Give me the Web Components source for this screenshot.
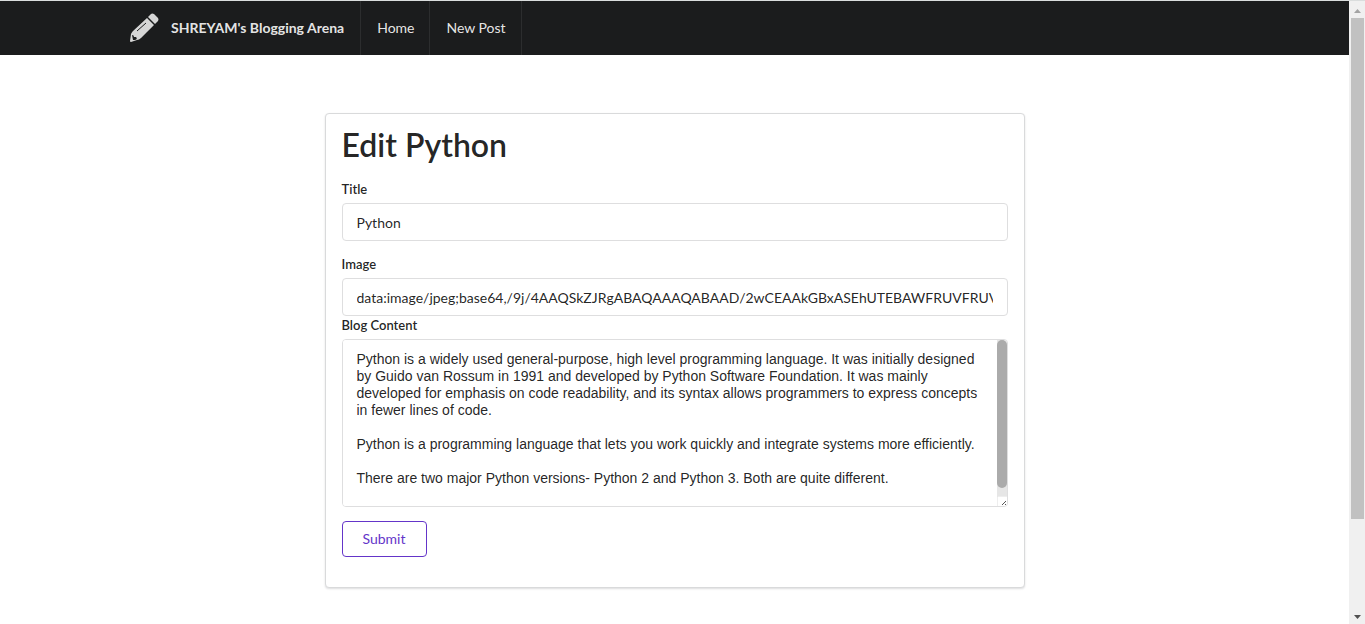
<!DOCTYPE html>
<html lang="en">
<head>
<meta charset="utf-8">
<title>Edit Python</title>
<style>
html,body{margin:0;height:100%;overflow:hidden;background:#fff}
body{font:14px/18px Lato,"Liberation Sans",sans-serif;color:rgba(0,0,0,.87)}
</style>
</head>
<body>
<blog-shell>
  <blog-nav slot="nav">
    <nav-item brand href="#">SHREYAM's Blogging Arena</nav-item>
    <nav-item href="#home">Home</nav-item>
    <nav-item href="#new">New Post</nav-item>
  </blog-nav>
  <blog-card heading="Edit Python"><edit-form></edit-form></blog-card>
</blog-shell>
<script>
const define = (name, html, setup) => {
  const template = document.createElement('template');
  template.innerHTML = '<style>*{box-sizing:border-box}</style>' + html;
  customElements.define(name, class extends HTMLElement {
    constructor() {
      super();
      this.attachShadow({mode: 'open'}).append(template.content.cloneNode(true));
    }
    connectedCallback() { if (setup) setup(this, this.shadowRoot); }
  });
};

define('page-scrollbar', `
<style>
:host{display:flex;flex-direction:column;width:16px;background:#f0f0f0}
svg{display:block;flex:none;width:16px;height:17px}
.track{flex:1;padding:0 1px 0 2px}
.thumb{height:85%;background:#c1c1c1}
</style>
<svg viewBox="0 0 16 17" aria-hidden="true"><path d="M5 12h7L8.500 8z" fill="#a3a3a3"/></svg>
<div class="track"><div class="thumb"></div></div>
<svg viewBox="0 0 16 17" aria-hidden="true"><path d="M5 8h7L8.500 12z" fill="#505050"/></svg>`);

define('blog-shell', `
<style>
:host{display:flex;flex-direction:column;height:100vh;border-top:1px solid #dadddd;box-sizing:border-box}
.view{display:flex;flex:1;min-height:0}
.page{flex:1;min-width:0;overflow:hidden}
main{padding:58px 16px 36px}
</style>
<div class="view"><div class="page"><slot name="nav"></slot><main><slot></slot></main></div><page-scrollbar></page-scrollbar></div>`);

define('blog-nav', `
<style>
:host{display:block;background:#1b1c1d}
nav{display:flex;max-width:1127px;height:54px;margin:0 auto}
</style>
<nav><slot></slot></nav>`);

define('nav-item', `
<style>
:host{display:flex}
a{display:flex;align-items:center;padding:0 15px 0 16px;border-right:1px solid #2c2d2e;color:rgba(255,255,255,.9);text-decoration:none}
svg{display:none}
:host([brand]) a{padding-right:16px;font-weight:700}
:host([brand]) svg{display:block;width:29px;height:31px;margin:0 12px 0 3px}
</style>
<a><svg viewBox="0 0 29 31" aria-hidden="true">
<g fill="#d6d6d6"><path d="M17 5L24 12 11 25Q9 27 7 27L1 29Q0 29 0 28L1 21Q2 19 3 18Z"/><path d="M18 4L21 1Q22 0 24 1L28 5Q29 6 28 8L25 11Z"/></g>
<path d="M7 18L16 10" stroke="#1b1c1d" stroke-width="1" fill="none"/><path d="M2 22Q4 22 4 24L6 24Q8 26 5 27L3 27Z" fill="#1b1c1d"/></svg><slot></slot></a>`,
(el, root) => { root.querySelector('a').href = el.getAttribute('href'); });

define('blog-card', `
<style>
:host{display:block;max-width:700px;margin:0 auto;padding:14px 16px 30px;box-sizing:border-box;background:#fff;border:1px solid #d9dadb;border-radius:4px;box-shadow:0 1px 2px rgba(34,36,38,.15)}
h1{margin:0 0 18px;font-size:32px;line-height:34px;font-weight:600}
</style>
<h1></h1><slot></slot>`,
(el, root) => { root.querySelector('h1').textContent = el.getAttribute('heading'); });

define('edit-form', `
<style>
:host{display:block}
form{margin:0}
.field{margin:0 0 14px}
.field.tight{margin:0}
label{display:block;margin:0 0 5px;font-size:13px;line-height:18px;font-weight:600}
input{display:block;width:100%;height:38px;margin:0;padding:9px 14px;border:1px solid #dededf;border-radius:4px;background:#fff;color:inherit;font:inherit;line-height:18px;outline:0}
.area{display:flex;height:168px;border:1px solid #dededf;border-radius:4px;overflow:hidden}
textarea{display:block;flex:1;min-width:0;margin:0;padding:11px 14px;border:0;outline:0;resize:none;overflow:hidden;background:#fff;color:inherit;font:14px/17px "Liberation Sans",sans-serif}
.bar{display:flex;flex-direction:column;width:10px;background:#e6e6e6}
.thumb{height:148px;border-radius:5px;background:#ababab}
.bar svg{display:block;width:11px;height:10px;margin-top:auto;background:#fff}
button{display:block;height:36px;padding:0 20px;border:1px solid #6435c9;border-radius:4px;background:#fff;color:#6435c9;font:inherit}
</style>
<form>
<div class="field"><label for="title">Title</label><input id="title" value="Python"></div>
<div class="field tight"><label for="image">Image</label><input id="image" value="data:image/jpeg;base64,/9j/4AAQSkZJRgABAQAAAQABAAD/2wCEAAkGBxASEhUTEBAWFRUVFRUVFRUV"></div>
<div class="field"><label for="content">Blog Content</label>
<div class="area"><textarea id="content">Python is a widely used general-purpose, high level programming language. It was initially designed by Guido van Rossum in 1991 and developed by Python Software Foundation. It was mainly developed for emphasis on code readability, and its syntax allows programmers to express concepts in fewer lines of code.

Python is a programming language that lets you work quickly and integrate systems more efficiently.

There are two major Python versions- Python 2 and Python 3. Both are quite different.</textarea><div class="bar"><div class="thumb"></div><svg viewBox="0 0 11 10" aria-hidden="true"><path d="M0 0H11M0 0V10" stroke="#ddd" fill="none"/><path d="M5 9L9 5M8 9L9 8" stroke="#555"/></svg></div></div></div>
<button type="submit">Submit</button>
</form>`);
</script>
</body>
</html>
